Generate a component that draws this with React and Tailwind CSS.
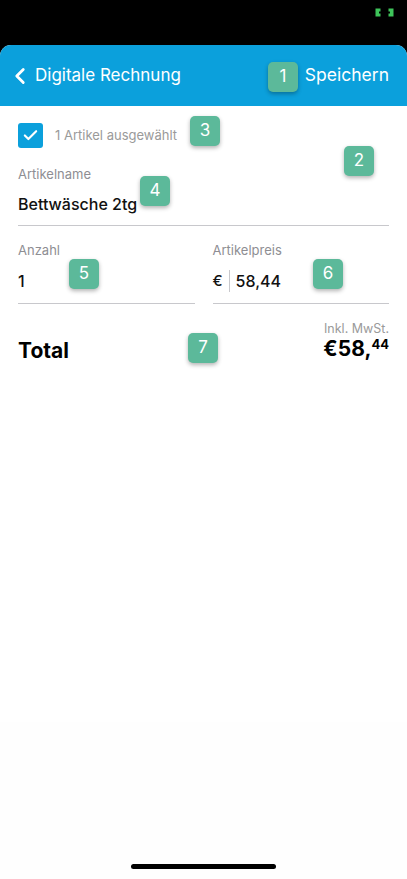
import { ChevronLeft, Check } from 'lucide-react';

function Badge({ n, className }) {
  return (
    <div
      className={`absolute flex h-[30px] w-[30px] items-center justify-center rounded-[5px] bg-[#5cb99a] text-[17px] text-white shadow-[0_2px_4px_rgba(0,0,0,0.3)] ${className}`}
    >
      {n}
    </div>
  );
}

function StatusIcon() {
  return (
    <svg width="19" height="9" viewBox="0 0 19 9" className="absolute left-[375px] top-[8px]">
      <path d="M0.5 0.5h5v3H4v2h1.5v3h-5z" fill="#3ec45a" />
      <path d="M18.5 0.5h-5v3H15v2h-1.5v3h5z" fill="#3ec45a" />
    </svg>
  );
}

export default function App() {
  return (
    <div
      className="relative flex h-[879px] w-[407px] flex-col overflow-hidden bg-black"
      style={{ fontFamily: 'Inter, Roboto, "Noto Sans", sans-serif' }}
    >
      <StatusIcon />
      <div className="h-[45px] shrink-0" />

      <div className="flex flex-1 flex-col overflow-hidden rounded-t-[11px] bg-white">
        <header className="flex h-[61px] shrink-0 items-center justify-between bg-[#0ba0dc] pl-[7px] pr-[18px] text-white">
          <div className="flex items-center gap-[2px]">
            <ChevronLeft size={26} strokeWidth={2.6} />
            <span className="text-[17px]">Digitale Rechnung</span>
          </div>
          <span className="text-[17.5px]">Speichern</span>
        </header>

        <main className="flex flex-col px-[18px]">
          <div className="mt-[17px] flex items-center gap-[12px]">
            <div className="flex h-[25px] w-[25px] items-center justify-center rounded-[3px] bg-[#0ba0dc]">
              <Check size={17} strokeWidth={3} className="text-white" />
            </div>
            <span className="text-[13px] text-[#9a9a9a]">1 Artikel ausgewählt</span>
          </div>

          <div className="mt-[17px] flex flex-col border-b border-[#c8c8cc] pb-[9px]">
            <span className="text-[13px] leading-[18px] text-[#8e8e93]">Artikelname</span>
            <span className="mt-[9px] text-[16px] font-medium leading-[24px] text-[#111]">Bettwäsche 2tg</span>
          </div>

          <div className="mt-[15px] flex gap-[18px]">
            <div className="flex flex-1 flex-col border-b border-[#c8c8cc] pb-[10px]">
              <span className="text-[13px] leading-[18px] text-[#8e8e93]">Anzahl</span>
              <span className="mt-[10px] text-[16px] font-medium leading-[24px] text-[#111]">1</span>
            </div>
            <div className="flex flex-1 flex-col border-b border-[#c8c8cc] pb-[10px]">
              <span className="text-[13px] leading-[18px] text-[#8e8e93]">Artikelpreis</span>
              <div className="mt-[10px] flex h-[24px] items-center">
                <span className="text-[15px] font-medium text-[#111]">€</span>
                <span className="mx-[6px] h-[22px] w-px bg-[#c8c8cc]" />
                <span className="text-[16px] font-medium text-[#111]">58,44</span>
              </div>
            </div>
          </div>

          <div className="mt-[17px] flex items-end justify-between">
            <span className="text-[21px] font-bold leading-[24px] text-black">Total</span>
            <div className="flex flex-col items-end">
              <span className="text-[12.5px] leading-[16px] text-[#9a9a9a]">Inkl. MwSt.</span>
              <span className="text-[21px] font-bold leading-[24px] text-black">
                €58,<span className="relative top-[-7px] text-[13px] font-bold">44</span>
              </span>
            </div>
          </div>
        </main>

        <div className="flex-1" />
        <footer className="flex h-[157px] shrink-0 items-end justify-center bg-[#fefefe] pb-[10px]">
          <div className="h-[5px] w-[145px] rounded-full bg-black" />
        </footer>
      </div>

      <Badge n="1" className="left-[268px] top-[62px]" />
      <Badge n="2" className="left-[344px] top-[146px]" />
      <Badge n="3" className="left-[190px] top-[116px]" />
      <Badge n="4" className="left-[140px] top-[176px]" />
      <Badge n="5" className="left-[69px] top-[259px]" />
      <Badge n="6" className="left-[313px] top-[259px]" />
      <Badge n="7" className="left-[188px] top-[333px]" />
    </div>
  );
}
